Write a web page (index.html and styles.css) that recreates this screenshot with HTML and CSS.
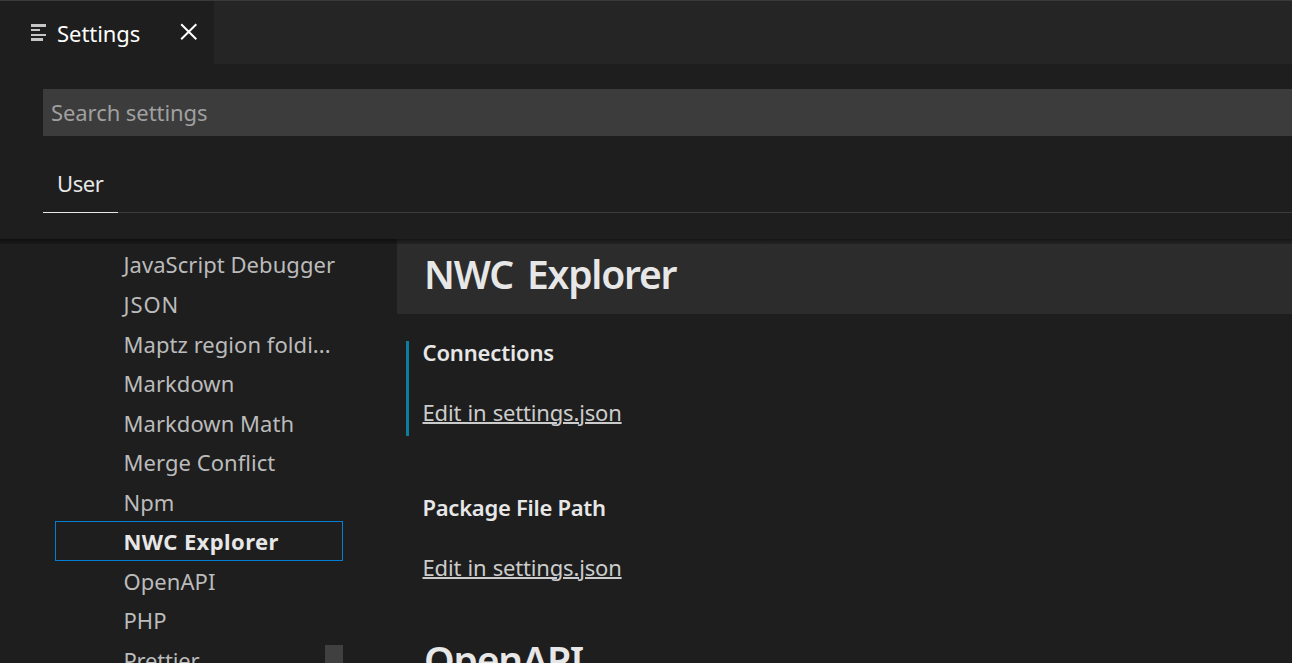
FILE: index.html
```html
<!DOCTYPE html>
<html lang="en">
<head>
<meta charset="utf-8">
<title>Settings</title>
<link rel="stylesheet" href="styles.css">
</head>
<body>
<div class="editor">
  <div class="tabs">
    <div class="tab">
      <svg class="tab-icon" width="16" height="18" viewBox="0 0 16 18"><path d="M0 0h15v3H0zM0 5h9v2H0zM0 10h15v2H0zM0 14h12v3H0z" fill="#c5c5c5"/></svg>
      <span class="tab-label">Settings</span>
      <svg class="tab-close" width="18" height="18" viewBox="0 0 18 18"><path d="M1.2 1.2L16.3 16.3M16.3 1.2L1.2 16.3" stroke="#fff" stroke-width="2" fill="none"/></svg>
    </div>
  </div>
  <header class="header">
    <div class="search"><span class="search-hint">Search settings</span></div>
    <div class="scopes"><div class="scope"><span class="scope-label">User</span></div></div>
  </header>
  <main class="body">
    <nav class="toc">
      <div class="row"><span>JavaScript Debugger</span></div>
      <div class="row"><span class="wide">JSON</span></div>
      <div class="row"><span>Maptz region foldi...</span></div>
      <div class="row"><span>Markdown</span></div>
      <div class="row"><span>Markdown Math</span></div>
      <div class="row"><span>Merge Conflict</span></div>
      <div class="row"><span>Npm</span></div>
      <div class="row selected"><span>NWC Explorer</span></div>
      <div class="row"><span>OpenAPI</span></div>
      <div class="row"><span>PHP</span></div>
      <div class="row"><span class="narrow">Prettier</span></div>
      <div class="thumb"></div>
    </nav>
    <section class="list">
      <h1 class="group active"><span>NWC Explorer</span></h1>
      <div class="setting modified">
        <h2 class="name"><span>Connections</span></h2>
        <a class="link">Edit in settings.json</a>
      </div>
      <div class="setting last">
        <h2 class="name tight"><span>Package File Path</span></h2>
        <a class="link">Edit in settings.json</a>
      </div>
      <h1 class="group"><span>OpenAPI</span></h1>
    </section>
  </main>
</div>
</body>
</html>
```
FILE: styles.css
```css
* { box-sizing: border-box; }
body { margin: 0; background: #1e1e1e; color: #ccc; font: 22px/30px "Noto Sans", "Open Sans", sans-serif; overflow: hidden; }
span, a { white-space: nowrap; }
.editor { height: 663px; display: flex; flex-direction: column; overflow: hidden; border-top: 1px solid #3a3a3a; }
.tabs { height: 63px; flex: none; background: #252526; display: flex; }
.tab { width: 214px; background: #1e1e1e; display: flex; align-items: flex-start; padding-left: 31px; }
.tab-icon { margin-top: 23px; flex: none; }
.tab-label { width: 122px; padding: 17px 0 0 10px; color: #fff; flex: none; letter-spacing: -.05px; }
.tab-close { margin: 22px 0 0 11px; flex: none; }
.header { height: 175px; flex: none; padding: 25px 0 0 43px; }
.search { height: 47px; background: #3c3c3c; padding: 8px 0 0 8px; color: #a0a0a0; letter-spacing: -.07px; }
.scopes { height: 77px; border-bottom: 1px solid #3c3c3c; display: flex; }
.scope { width: 75px; height: 77px; border-bottom: 1px solid #e7e7e7; padding: 32px 0 0 14px; color: #e7e7e7; letter-spacing: -.4px; }
.body { flex: 1; min-height: 0; display: flex; overflow: hidden; position: relative; }
.body::before { content: ""; position: absolute; top: 0; left: 0; right: 0; height: 5px; background: linear-gradient(#00000080, #00000030); z-index: 1; }
.toc { width: 397px; flex: none; padding: 5.5px 0 0 55px; color: #bbb; position: relative; letter-spacing: .05px; }
.row { height: 39.5625px; width: 288px; padding: 4.9px 0 0 68.5px; }
.wide { letter-spacing: .9px; }
.narrow { letter-spacing: -.2px; }
.selected { border: 1px solid #007fd4; height: 40px; margin-bottom: -.4375px; padding: 4px 0 0 67.5px; font-weight: 700; color: #e7e7e7; letter-spacing: .4px; }
.thumb { position: absolute; left: 325px; top: 406px; width: 18px; height: 18px; background: #404040; }
.list { flex: 1; min-width: 0; color: #e7e7e7; }
.group { margin: 0; height: 75px; font-size: 39px; line-height: 50px; font-weight: 600; letter-spacing: -1.2px; word-spacing: 5px; padding: 10px 0 0 27px; }
.active { background: #2c2c2c; margin-bottom: 27px; }
.setting { display: flow-root; margin: 0 0 60px 9px; border-left: 3px solid transparent; padding-left: 13.5px; height: 95px; }
.last { margin-bottom: 34px; }
.modified { border-color: #0c7d9d; }
.name { margin: -4px 0 30px; font-size: 22px; line-height: 30px; font-weight: 600; letter-spacing: -.15px; }
.tight { letter-spacing: -.27px; }
.link { display: block; color: #ccc; text-decoration: underline; text-decoration-thickness: 2px; letter-spacing: -.17px; word-spacing: .7px; }
```
